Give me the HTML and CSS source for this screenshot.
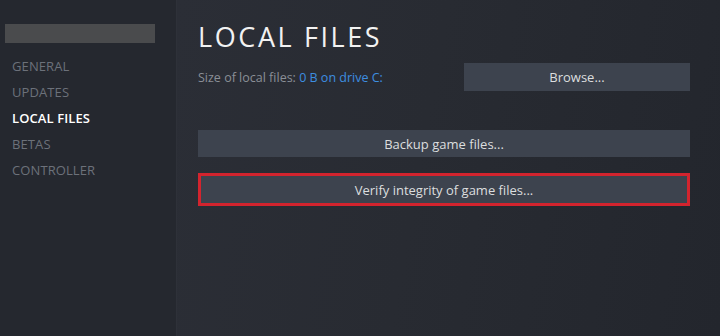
FILE: index.html
```html
<!DOCTYPE html>
<html>
<head>
<meta charset="utf-8">
<link rel="stylesheet" href="styles.css">
</head>
<body>
<div class="window">
  <aside class="sidebar">
    <div class="game-name"></div>
    <nav class="nav">
      <div class="nav-item">GENERAL</div>
      <div class="nav-item">UPDATES</div>
      <div class="nav-item active">LOCAL FILES</div>
      <div class="nav-item">BETAS</div>
      <div class="nav-item">CONTROLLER</div>
    </nav>
  </aside>
  <main class="content">
    <h1 class="title">LOCAL FILES</h1>
    <div class="size-row">
      <div class="size-text">Size of local files: <span class="link">0 B on drive C:</span></div>
      <div class="btn browse">Browse...</div>
    </div>
    <div class="btn wide backup">Backup game files...</div>
    <div class="highlight">
      <div class="btn wide verify">Verify integrity of game files...</div>
    </div>
  </main>
</div>
</body>
</html>
```
FILE: styles.css
```css
html, body {
  margin: 0;
  padding: 0;
  width: 720px;
  height: 336px;
  overflow: hidden;
  background: #24272e;
  font-family: "Open Sans", "Noto Sans", "Liberation Sans", sans-serif;
}
.window {
  display: flex;
  width: 720px;
  height: 336px;
}
.sidebar {
  width: 177px;
  flex: none;
  background: #25282f;
  border-right: 1px solid #2e3139;
  padding-top: 24px;
  box-sizing: border-box;
}
.game-name {
  margin-left: 5px;
  width: 150px;
  height: 19px;
  background: #4a4b4d;
}
.nav {
  display: flex;
  flex-direction: column;
  margin-top: 14px;
  padding-left: 12px;
}
.nav-item {
  height: 26px;
  line-height: 18px;
  font-size: 13px;
  color: #6c717a;
  letter-spacing: 0.1px;
}
.nav-item.active {
  color: #ffffff;
  font-weight: 600;
}
.content {
  flex: 1;
  background: linear-gradient(100deg, #2b2e36 0%, #282b32 45%, #23262d 100%);
  padding: 20px 30px 0 21px;
  box-sizing: border-box;
}
.title {
  margin: 0;
  font-size: 27px;
  font-weight: 400;
  color: #f2f2f2;
  letter-spacing: 2.6px;
  line-height: 34px;
}
.size-row {
  display: flex;
  align-items: center;
  justify-content: space-between;
  margin-top: 9px;
}
.size-text {
  font-size: 12.5px;
  color: #8a8f97;
}
.link {
  color: #3d8ee0;
}
.btn {
  background: #3d434e;
  color: #dcdedf;
  font-size: 13px;
  height: 28px;
  display: flex;
  align-items: center;
  justify-content: center;
  box-sizing: border-box;
}
.browse {
  width: 226px;
}
.wide {
  width: 492px;
}
.backup {
  margin-top: 39px;
  height: 27px;
}
.highlight {
  margin-top: 16px;
  width: 492px;
  border: 3px solid #d3242e;
  box-sizing: border-box;
}
.verify {
  width: auto;
  height: 27px;
}
```
